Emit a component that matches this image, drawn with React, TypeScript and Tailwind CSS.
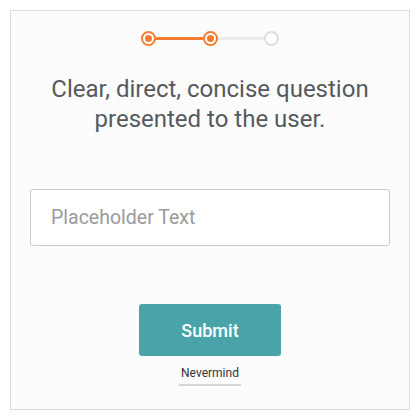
export default function App() {
  return (
    <div className="w-[420px] h-[420px] bg-white p-[10px]" style={{ fontFamily: 'Roboto, "Noto Sans", sans-serif' }}>
      <div className="w-[400px] h-[400px] border border-[#dcdcdc] bg-[#fcfcfc] flex flex-col items-center">
        {/* stepper */}
        <div className="mt-[20px] flex items-center">
          <div className="w-[15px] h-[15px] rounded-full border-2 border-[#f47b2f] bg-white flex items-center justify-center">
            <div className="w-[7px] h-[7px] rounded-full bg-[#f47b2f]" />
          </div>
          <div className="w-[47px] h-[3px] bg-[#f47b2f]" />
          <div className="w-[15px] h-[15px] rounded-full border-2 border-[#f47b2f] bg-white flex items-center justify-center">
            <div className="w-[7px] h-[7px] rounded-full bg-[#f47b2f]" />
          </div>
          <div className="w-[46px] h-[3px] bg-[#ebebeb]" />
          <div className="w-[15px] h-[15px] rounded-full border-2 border-[#dddddd] bg-white" />
        </div>

        <h1 className="mt-[28px] text-center text-[24px] leading-[30px] text-[#555a5e] font-normal">
          Clear, direct, concise question
          <br />
          presented to the user.
        </h1>

        <input
          type="text"
          placeholder="Placeholder Text"
          className="mt-[55px] w-[360px] h-[57px] border border-[#cccccc] rounded-[3px] bg-white px-[20px] text-[19.5px] text-[#555] placeholder:text-[#9a9a9a] outline-none"
        />

        <button className="mt-[58px] w-[142px] h-[52px] rounded-[3px] bg-[#4aa3a9] text-white text-[18px] font-medium">
          Submit
        </button>

        <div className="mt-[8px] text-[12px] text-[#333] pb-[2px] border-b-2 border-[#d6d6d6] px-[2px]">
          Nevermind
        </div>
      </div>
    </div>
  );
}
